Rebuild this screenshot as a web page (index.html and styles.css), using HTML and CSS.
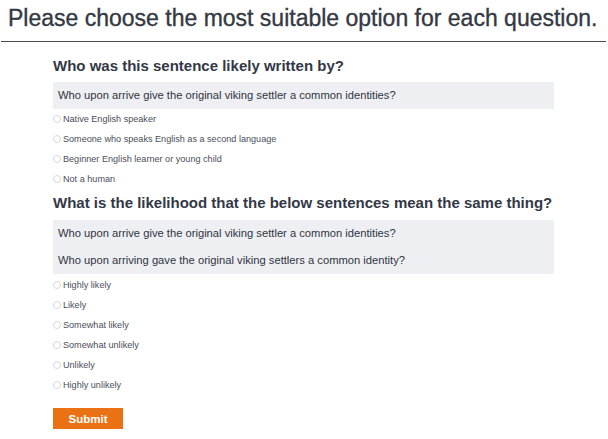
FILE: index.html
```html
<!DOCTYPE html>
<html>
<head>
<meta charset="utf-8">
<link rel="stylesheet" href="styles.css">
</head>
<body>
<header class="page-header">
  <h1 class="page-title">Please choose the most suitable option for each question.</h1>
</header>
<main class="survey">
  <section class="question">
    <h2 class="question-title">Who was this sentence likely written by?</h2>
    <div class="sentence-box">
      <p class="sentence">Who upon arrive give the original viking settler a common identities?</p>
    </div>
    <ul class="options">
      <li class="option"><span class="radio"></span><span class="label">Native English speaker</span></li>
      <li class="option"><span class="radio"></span><span class="label">Someone who speaks English as a second language</span></li>
      <li class="option"><span class="radio"></span><span class="label">Beginner English learner or young child</span></li>
      <li class="option"><span class="radio"></span><span class="label">Not a human</span></li>
    </ul>
  </section>
  <section class="question question-second">
    <h2 class="question-title">What is the likelihood that the below sentences mean the same thing?</h2>
    <div class="sentence-box">
      <p class="sentence">Who upon arrive give the original viking settler a common identities?</p>
      <p class="sentence">Who upon arriving gave the original viking settlers a common identity?</p>
    </div>
    <ul class="options options-second">
      <li class="option"><span class="radio"></span><span class="label">Highly likely</span></li>
      <li class="option"><span class="radio"></span><span class="label">Likely</span></li>
      <li class="option"><span class="radio"></span><span class="label">Somewhat likely</span></li>
      <li class="option"><span class="radio"></span><span class="label">Somewhat unlikely</span></li>
      <li class="option"><span class="radio"></span><span class="label">Unlikely</span></li>
      <li class="option"><span class="radio"></span><span class="label">Highly unlikely</span></li>
    </ul>
  </section>
  <button class="submit" type="button">Submit</button>
</main>
</body>
</html>
```

FILE: styles.css
```css
html, body {
  margin: 0;
  padding: 0;
  background: #ffffff;
}
body {
  font-family: "Liberation Sans", Arial, sans-serif;
  color: #333845;
  width: 608px;
}
.page-header {
  padding: 0 2px 0 1px;
}
.page-title {
  margin: 0;
  padding-left: 7px;
  font-size: 23px;
  font-weight: normal;
  line-height: 36px;
  height: 41px;
  color: #343943;
  -webkit-text-stroke: 0.35px #343943;
  white-space: nowrap;
  border-bottom: 1px solid #4d4d4d;
}
.survey {
  margin-left: 53px;
  width: 501px;
}
.question-title {
  margin: 14px 0 6px;
  font-size: 15px;
  font-weight: bold;
  line-height: 20px;
  color: #333845;
  white-space: nowrap;
}
.question-second .question-title {
  margin-top: 4px;
  margin-bottom: 7px;
}
.sentence-box {
  background: #eeeff3;
  padding: 0 5px;
}
.sentence {
  margin: 0;
  font-size: 11.2px;
  line-height: 27px;
  color: #2f3440;
}
.options {
  list-style: none;
  margin: 0;
  padding: 0;
}
.options-second {
  margin-top: 1px;
}
.option {
  display: flex;
  align-items: center;
  gap: 2px;
  height: 20px;
}
.radio {
  width: 6px;
  height: 6px;
  border: 1px solid #d6d7db;
  border-radius: 50%;
  background: #fff;
  flex: none;
}
.label {
  font-size: 9.1px;
  color: #4a4e58;
}
.submit {
  margin-top: 13px;
  width: 70px;
  height: 21px;
  background: #ea7215;
  color: #ffffff;
  border: none;
  padding: 0;
  font-family: "Liberation Sans", Arial, sans-serif;
  font-weight: bold;
  font-size: 11.5px;
  cursor: pointer;
}
```
